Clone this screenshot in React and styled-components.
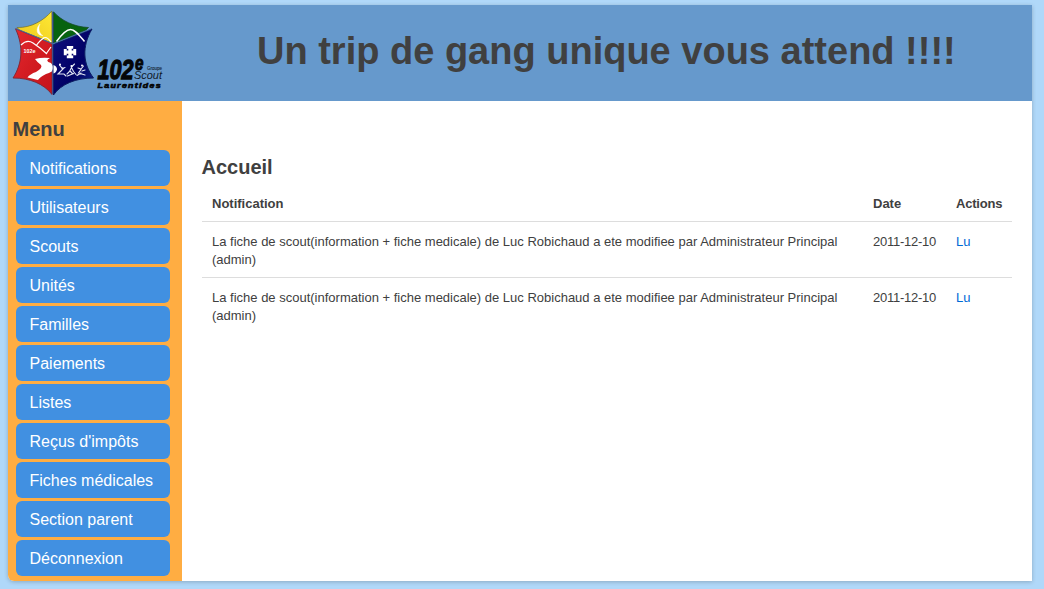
import React from "react";
import styled, { createGlobalStyle } from "styled-components";

const GlobalStyle = createGlobalStyle`
  * { box-sizing: border-box; }
  html, body { margin: 0; padding: 0; }
  body {
    background: #b0d8f9;
    color: #404040;
    font: 13px/18px "Liberation Sans", Arial, sans-serif;
  }
  #root { display: flow-root; }
`;

const Page = styled.div`
  display: flex;
  flex-direction: column;
  width: 1024px;
  height: 576px;
  margin: 5px 0 8px 8px;
  background: #fff;
  border-radius: 0 0 0 6px;
  box-shadow: 0 1px 4px rgba(0, 0, 0, 0.22);
`;

const Header = styled.header`
  display: flex;
  flex: none;
  height: 96px;
  background: #6699cc;
`;

const LogoSvg = styled.svg`
  display: block;
  flex: none;
  width: 162px;
  height: 96px;
`;

const Banner = styled.h1`
  margin: 0;
  padding: 23px 0 0 87px;
  font-size: 38px;
  line-height: 46px;
  white-space: nowrap;
`;

const Body = styled.div`
  display: flex;
  flex: 1;
`;

const Sidebar = styled.nav`
  flex: none;
  width: 174px;
  padding: 10px 12px 0 8px;
  background: #ffad42;
  border-radius: 0 0 0 6px;
`;

const Heading = styled.h2`
  margin: 0;
  font-size: 20px;
  line-height: 36px;
`;

const MenuHeading = styled(Heading)`
  margin: 0 0 3px -3.5px;
`;

const PageHeading = styled(Heading)`
  margin-left: -0.5px;
`;

const MenuList = styled.ul`
  display: flex;
  flex-direction: column;
  gap: 3px;
  margin: 0;
  padding: 0;
  list-style: none;
`;

const MenuLink = styled.a`
  display: block;
  height: 36px;
  padding-left: 13.5px;
  border-radius: 6px;
  background: #4190e1;
  color: #fff;
  font-size: 16px;
  line-height: 37px;
  text-decoration: none;
  white-space: nowrap;
`;

const Content = styled.main`
  flex: 1;
  padding: 48px 20px 0;
`;

const Table = styled.table`
  width: 810px;
  border-collapse: separate;
  border-spacing: 0;
  table-layout: fixed;
  text-align: left;
`;

const Col = styled.col`
  width: ${(p) => p.$width}px;
`;

const HeadCell = styled.th`
  padding: 10px 10px 8px;
  line-height: 18px;
  font-weight: bold;
  letter-spacing: ${(p) => p.$spacing || "normal"};
`;

const Cell = styled.td`
  padding: 11px 10px 8px;
  border-top: 1px solid #ddd;
  line-height: 18px;
  letter-spacing: ${(p) => p.$spacing || "normal"};
  vertical-align: top;
  white-space: nowrap;
`;

const ActionLink = styled.a`
  color: #0069d6;
  text-decoration: none;
`;

const menu = [
  "Notifications", "Utilisateurs", "Scouts", "Unités", "Familles", "Paiements",
  "Listes", "Reçus d'impôts", "Fiches médicales", "Section parent", "Déconnexion",
];

const notice = [
  "La fiche de scout(information + fiche medicale) de Luc Robichaud a ete modifiee par Administrateur Principal",
  "(admin)",
];

const rows = [
  { id: 1, text: notice, date: "2011-12-10" },
  { id: 2, text: notice, date: "2011-12-10" },
];

const Logo = () => (
  <LogoSvg viewBox="8 5 162 96" role="img" aria-label="102e Groupe Scout Laurentides">
    <defs>
      <linearGradient id="red" x1="0" x2="1" y1="0" y2="1">
        <stop offset="0" stopColor="#e52a30" /><stop offset=".5" stopColor="#d31c22" /><stop offset="1" stopColor="#c5131a" />
      </linearGradient>
      <linearGradient id="blue" x1="0" x2="1" y1="0" y2="1">
        <stop offset="0" stopColor="#101080" /><stop offset=".6" stopColor="#000064" /><stop offset="1" stopColor="#102a94" />
      </linearGradient>
      <linearGradient id="yellow" x1="0" x2="1" y1="1" y2="0">
        <stop offset="0" stopColor="#ecc81c" /><stop offset="1" stopColor="#ffe935" />
      </linearGradient>
    </defs>
    <path d="M51.800 11C44 20.500 31 28 17 27.500L20 30.500L52 43Z" fill="url(#yellow)" stroke="#746e27" strokeWidth=".7" />
    <path d="M53.500 11.800C61 20.500 74 27 88.500 27.500L86 30L53.500 43Z" fill="#07630f" stroke="#174b2c" strokeWidth=".8" />
    <path d="M15.500 28.800L52 43.500V94.500C44 84 30 78 13 78C22 64 24 47 15.500 28.800Z" fill="url(#red)" stroke="#7b2837" strokeWidth=".9" />
    <path d="M92 29L53.500 44.500V95C61 84 76 78 93.500 78C83 64 81.500 47 92 29Z" fill="url(#blue)" stroke="#0b1c60" strokeWidth="1" />
    <path d="M52.800 12V94" stroke="#26388a" strokeWidth=".8" />
    <path d="M16 28.500L52.800 43.800L91 29" fill="none" stroke="#426da5" strokeWidth=".9" />
    <path d="M40 24C35.500 28 36 35.500 43 35.800C38.800 33 38 28 40 24Z" fill="#fff" stroke="#fff" strokeWidth=".4" />
    <path d="M56.500 41.500C62 34 66 29.500 70.500 29.500C75 29.500 79 35 84.500 41.500" fill="none" stroke="#fff" strokeWidth="1.500" />
    <path d="M21 45Q27 39 33 43L40 48L47 54M36 46Q40 40 44 38M43 38Q47 36 51 42M46 54L51 47" fill="none" stroke="#fff" strokeWidth="1.200" />
    <path d="M35 59Q42 57 50 58Q44 61 51 63Q54 66 51.800 71.500Q49 73 46 74Q40 77 38 80L27.500 77.500Q30 74 36 72Q43 68 41 65Q37 62 35 59Z" fill="#fff" />
    <path d="M53.500 65Q57 66 57 69.500Q56 73 53.500 73.500Z" fill="#fff" />
    <path d="M66.800 46h6.400v2.800h-1.500v1.600h1.600v-1.500h2.900v6.400h-2.900v-1.500h-1.600v1.600h1.500v2.800h-6.400v-2.800h1.500v-1.600h-1.600v1.500h-2.900v-6.400h2.900v1.500h1.600v-1.600h-1.500Z" fill="#fff" />
    <g fill="none" stroke="#dfe3f1" strokeWidth="1.150" strokeLinecap="round">
      <path d="M59.500 65l2 2.500 2 1-3 3-2.500 2.500h6l2 2M62 68.500l3-1" />
      <path d="M67 74l2.500-2.500 2-4 2 4 2.500 3M67.500 76l6-2.500M71.500 67l3-3M70 71l3 3" />
      <path d="M78 68l3 1 2.500-3M81 69.500l-2.500 3.500 6.500 2M77 75.500l4-2.500M82 71l3-1" />
    </g>
    <circle cx="60" cy="64.500" r="1" fill="#fff" />
    <circle cx="71.500" cy="66" r="1.100" fill="#fff" />
    <circle cx="82" cy="65.500" r="1" fill="#fff" />
    <g fontFamily="Liberation Sans, Arial, sans-serif">
      <text x="23.500" y="53.300" fill="#fff" fontSize="5" fontWeight="700" textLength="12" lengthAdjust="spacingAndGlyphs">102e</text>
      <g fill="#050608" stroke="#050608" fontWeight="700" fontStyle="italic">
        <text x="97.500" y="78.700" fontSize="28.500" strokeWidth="1.300" textLength="36" lengthAdjust="spacingAndGlyphs">102</text>
        <text x="135" y="69.500" fontSize="19.500" strokeWidth="1" textLength="8.500" lengthAdjust="spacingAndGlyphs">e</text>
        <text x="97.500" y="87.500" fontSize="6.500" strokeWidth=".6" letterSpacing="1" textLength="64.500" lengthAdjust="spacingAndGlyphs">Laurentides</text>
      </g>
      <text x="147" y="69.500" fill="#142333" stroke="#142333" strokeWidth=".1" fontSize="4.800" textLength="15" lengthAdjust="spacingAndGlyphs">Groupe</text>
      <text x="134" y="79.300" fill="#10192a" fontSize="11.800" fontStyle="italic" textLength="28" lengthAdjust="spacingAndGlyphs">Scout</text>
    </g>
  </LogoSvg>
);

export default function App() {
  return (
    <>
      <GlobalStyle />
      <Page>
        <Header>
          <Logo />
          <Banner>Un trip de gang unique vous attend !!!!</Banner>
        </Header>
        <Body>
          <Sidebar>
            <MenuHeading>Menu</MenuHeading>
            <MenuList>
              {menu.map((label) => (
                <li key={label}><MenuLink>{label}</MenuLink></li>
              ))}
            </MenuList>
          </Sidebar>
          <Content>
            <PageHeading>Accueil</PageHeading>
            <Table>
              <colgroup><Col $width={661} /><Col $width={83} /><Col $width={66} /></colgroup>
              <thead>
                <tr>
                  <HeadCell>Notification</HeadCell>
                  <HeadCell>Date</HeadCell>
                  <HeadCell $spacing="-0.2px">Actions</HeadCell>
                </tr>
              </thead>
              <tbody>
                {rows.map((row) => (
                  <tr key={row.id}>
                    <Cell>{row.text[0]}<br />{row.text[1]}</Cell>
                    <Cell $spacing="-0.25px">{row.date}</Cell>
                    <Cell><ActionLink>Lu</ActionLink></Cell>
                  </tr>
                ))}
              </tbody>
            </Table>
          </Content>
        </Body>
      </Page>
    </>
  );
}
